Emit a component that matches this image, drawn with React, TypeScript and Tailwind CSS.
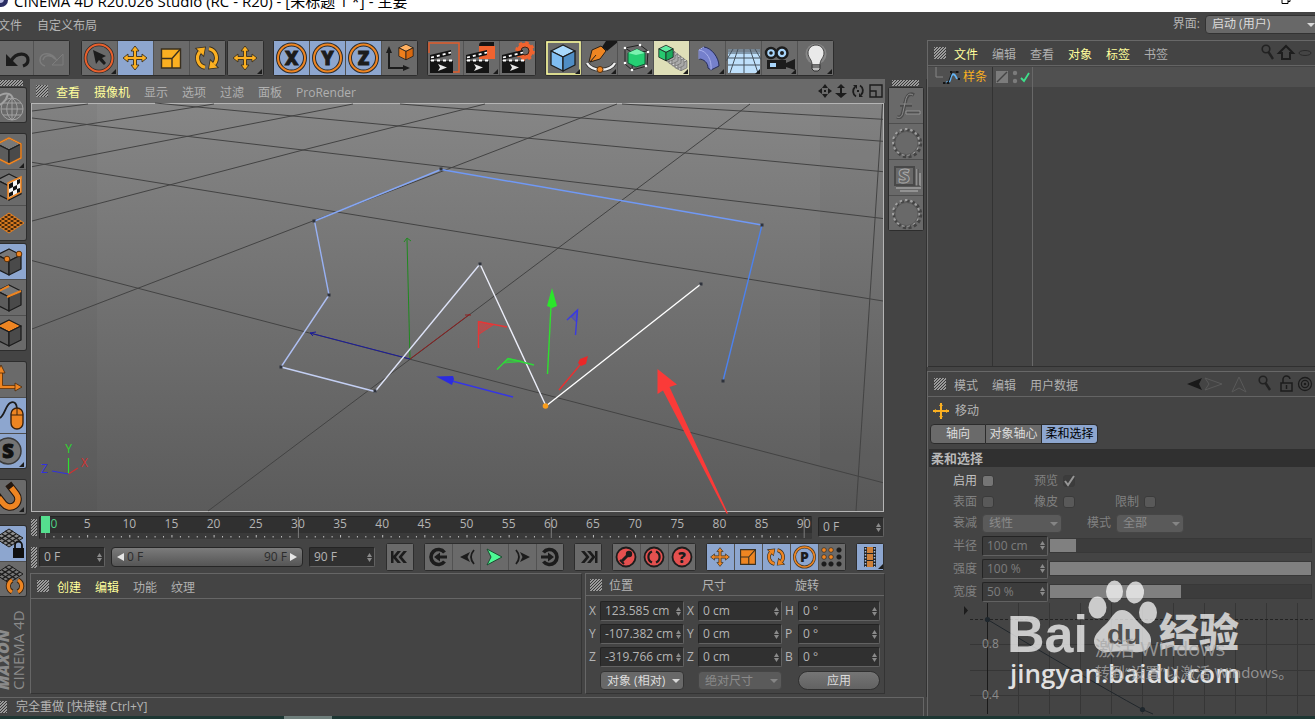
import { useState } from 'react';
import type { ReactNode } from 'react';
import clsx from 'clsx';

const DARK = '#1c1c1c';
const ORANGE = '#ee8522';
const YELLOW = '#fbb021';

const MOVE_PATH =
  'M0-12 4-7H1.5V-1.5H7V-4L12 0 7 4V1.5H1.5V7H4L0 12-4 7H-1.5V1.5H-7V4L-12 0-7-4V-1.5H-1.5V-7H-4Z';

/* ---------- icons ---------- */

function Icon({ w = 36, h = 34, children }: { w?: number; h?: number; children: ReactNode }) {
  return (
    <svg width={w} height={h} viewBox={`0 0 ${w} ${h}`} className="shrink-0" aria-hidden="true">
      {children}
    </svg>
  );
}

const corner = <path d="M34 28v5h-5z" fill={DARK} />;

function Cube({ x, y, s = 1, top = '#787878', left = '#5c5c5c', right = '#4a4a4a', stroke = DARK }: {
  x: number; y: number; s?: number; top?: string; left?: string; right?: string; stroke?: string;
}) {
  return (
    <g transform={`translate(${x} ${y}) scale(${s})`} stroke={stroke} strokeWidth={1.3} strokeLinejoin="round">
      <path d="M0-13 12-7 0-1-12-7Z" fill={top} />
      <path d="M-12-7 0-1V13L-12 7Z" fill={left} />
      <path d="M12-7 0-1V13L12 7Z" fill={right} />
    </g>
  );
}

function Rotate({ x, y, s = 1, color = YELLOW }: { x: number; y: number; s?: number; color?: string }) {
  const arcs = 'M-2 9.200A9.400 9.400 0 0 1-7-6.300M2-9.200A9.400 9.400 0 0 1 7 6.300';
  const heads = 'M-10.500-9.500-2-10.500-3.500-2.500ZM10.500 9.500 2 10.500 3.500 2.500Z';
  return (
    <g transform={`translate(${x} ${y}) scale(${s})`}>
      <path d={arcs} fill="none" stroke="#3a3020" strokeWidth={5} />
      <path d={heads} fill="#3a3020" stroke="#3a3020" strokeWidth={1.600} />
      <path d={arcs} fill="none" stroke={color} strokeWidth={3.200} />
      <path d={heads} fill={color} />
    </g>
  );
}

function Scale({ x, y, s = 1, color = YELLOW }: { x: number; y: number; s?: number; color?: string }) {
  return (
    <g transform={`translate(${x} ${y}) scale(${s})`} stroke="#3a3020" strokeWidth={1.4}>
      <path d="M-9.500-9.500h19v19h-19z" fill={color} />
      <path d="M-9.500 0H1V9.500M1 0 9.500-9.500" fill="none" />
    </g>
  );
}

function Move({ x, y, s = 1, color = YELLOW }: { x: number; y: number; s?: number; color?: string }) {
  return <path transform={`translate(${x} ${y}) scale(${s})`} d={MOVE_PATH} fill={color} stroke="#3a3020" strokeWidth={0.9} />;
}

function AxisLetter({ letter }: { letter: string }) {
  return (
    <Icon>
      <circle cx={17.500} cy={17} r={13.500} fill="none" stroke="#2b2b2b" strokeWidth={4} />
      <circle cx={17.500} cy={17} r={13.500} fill="none" stroke={ORANGE} strokeWidth={2} />
      <text x={17.500} y={24} textAnchor="middle" fontSize={19} fontWeight={800} fontFamily="Open Sans, sans-serif" fill={DARK} stroke={DARK} strokeWidth={0.8}>
        {letter}
      </text>
    </Icon>
  );
}

function Clapper({ extra, tri }: { extra: ReactNode; tri?: boolean }) {
  return (
    <Icon>
      {extra}
      <path d="M2 20h23v12H2z" fill="#141414" />
      <path d="M2 14 23 9v5L2 19z" fill="#141414" />
      <path d="M3 16.500 23 11.500M3 19.500h22" stroke="#fff" strokeWidth={1.800} strokeDasharray="3 3" />
      <path d="m10 23 9 3.500-9 3.500 2-3.500z" fill="#e8e8e8" />
      {tri && corner}
    </Icon>
  );
}

const undoIcon = (
  <Icon>
    <path d="M8 13v12h12z" fill={DARK} />
    <path d="M13 20c5-9 17-9 17-1 0 3-2 5-5 6" fill="none" stroke={DARK} strokeWidth={3.200} />
  </Icon>
);
const redoIcon = (
  <Icon>
    <path d="M29 13v11H18z" fill="none" stroke="#7d7d7d" />
    <path d="M23 20c-5-10-17-9-17-1 0 3 2 5 5 6M21 18c-4-5-11-4-12 1" fill="none" stroke="#7d7d7d" strokeWidth={1.500} />
  </Icon>
);
const pickIcon = (
  <Icon>
    <circle cx={17} cy={17} r={13.500} fill="none" stroke="#2b2b2b" strokeWidth={3.500} />
    <circle cx={17} cy={17} r={13.500} fill="none" stroke="#e9602d" strokeWidth={2} />
    <path d="m11 9 13 6-4 2 4 5-2 2-5-5-3 4z" fill={DARK} />
    {corner}
  </Icon>
);
const coordIcon = (
  <Icon>
    <path d="M7 12v15h16" fill="none" stroke={DARK} strokeWidth={2} />
    <path d="M7 5l3 7H4zM28 27l-7-3v6z" fill={DARK} />
    <Cube x={24} y={11} s={0.6} top="#ffb060" left="#ee7f1d" right="#d9690f" />
  </Icon>
);
const gear = (
  <g>
    <circle cx={25} cy={10} r={6} fill="none" stroke="#f0632f" strokeWidth={4.500} />
    <circle cx={25} cy={10} r={8.500} fill="none" stroke="#f0632f" strokeWidth={2.500} strokeDasharray="3.340 3.340" />
    <circle cx={25} cy={10} r={4} fill="none" stroke="#3a2418" />
  </g>
);
const penIcon = (
  <Icon>
    <path d="M24 0h12v1l-11 9-5-4z" fill="#191919" />
    <path d="M7 21 10 9l9-4 5 5-6 8-10 3 6-7" fill={ORANGE} stroke="#2b2016" />
    <path d="M5 22c5 9 23 9 28 0" fill="none" stroke="#333" strokeWidth={4} />
    <path d="M5 22c5 9 23 9 28 0" fill="none" stroke="#f0f0f0" strokeWidth={2.400} />
    <circle cx={18} cy={28.500} r={3} fill={ORANGE} stroke="#55300f" />
    {corner}
  </Icon>
);
const subdivIcon = (
  <Icon>
    <path d="M7 7 22 4 30 10 29 25 14 29 7 23ZM7 7l8 5 15-2M15 12l-1 17" fill="none" stroke="#222" />
    <path d="M10 12 19 8l8 4v11l-9 3-8-4z" fill="#25cf73" stroke="#0c5f35" />
    <path d="M10 12 19 8l8 4-9 2z" fill="#7af2b0" />
    {[[7, 7], [22, 4], [30, 11], [28, 25], [14, 29], [7, 22]].map(([x, y]) => (
      <circle key={`${x}-${y}`} cx={x} cy={y} r={1.300} fill="#fff" />
    ))}
    {corner}
  </Icon>
);
const clonerIcon = (
  <Icon>
    {[27, 24, 21, 18, 15].map((x) => (
      <Cube key={x} x={x} y={x * 0.75 + 3} s={0.5} top="#f6f6f6" left="#d5d5d5" right="#a9a9a9" stroke="#6b6b6b" />
    ))}
    <Cube x={12} y={12} s={0.6} top="#5fe9a0" left="#27c86f" right="#1ba95b" />
    {corner}
  </Icon>
);
const bendIcon = (
  <Icon>
    <path d="M9 9 14 6c8 1 15 11 15 19l-8 4-3-2c0-5-4-9-9-9z" fill="#7580cc" stroke="#252b57" />
    <path d="M9 9c8 1 13 10 12 20M14 6 9 9l0 9" fill="none" stroke="#a9b1ec" />
    {corner}
  </Icon>
);
const floorIcon = (
  <Icon>
    <path d="M2 8h32v24H2z" fill="#bfe0fb" />
    <path d="M2 8h32v3H2z" fill="#788693" />
    <path d="M2 12h32M2 17h32M2 24h32M18 8v24M12 8 4 32M24 8l8 24M7 8 0 20M29 8l7 12" stroke="#46525e" />
    {corner}
  </Icon>
);
const cameraIcon = (
  <Icon>
    <path d="M5 19h19v9H5zM24 22l9-4v11l-9-3z" fill={DARK} />
    <circle cx={9} cy={12} r={5} fill="#a8d5fa" stroke={DARK} strokeWidth={2.500} />
    <circle cx={20} cy={12} r={5.500} fill="#a8d5fa" stroke={DARK} strokeWidth={2.500} />
    <circle cx={9} cy={12} r={1.800} fill={DARK} />
    <circle cx={20} cy={12} r={2} fill={DARK} />
    <path d="M8 22h6v4H8z" fill="#a8d5fa" />
    {corner}
  </Icon>
);
const bulbIcon = (
  <Icon>
    <circle cx={18} cy={13} r={10.500} fill="#999" opacity={0.6} />
    <path d="M18 4c-5 0-8 4-8 8 0 5 4 6 4 12h8c0-6 4-7 4-12 0-4-3-8-8-8z" fill="#e9e9e9" stroke="#444" />
    <path d="M14 24h8v4l-2 2h-4l-2-2zM14 26h8" fill="#bbb" stroke="#333" />
    {corner}
  </Icon>
);

/* ---------- toolbar building blocks ---------- */

function ToolGroup({ children, className }: { children: ReactNode; className?: string }) {
  return <div className={clsx('flex rounded-xs ring-1 ring-[#2d2d2d]', className)}>{children}</div>;
}

function Tool({ label, active, tone, children }: { label: string; active?: boolean; tone?: string; children: ReactNode }) {
  return (
    <button
      type="button"
      aria-label={label}
      className={clsx(
        'flex h-[34px] w-9 overflow-hidden border-r border-[#525252] last:w-[35px] last:border-r-0',
        tone ?? (active ? 'bg-[#8da6cf]' : 'bg-[#6a6a6a]'),
      )}
    >
      {children}
    </button>
  );
}

function SideTool({ label, active, children }: { label: string; active?: boolean; children: ReactNode }) {
  return (
    <button
      type="button"
      aria-label={label}
      className={clsx(
        'flex h-9 w-[26px] justify-end overflow-hidden border-b border-[#4e4e4e] last:h-[34px] last:border-b-0',
        active ? 'bg-[#8da6cf]' : 'bg-[#6a6a6a]',
      )}
    >
      <Icon h={36}>{children}</Icon>
    </button>
  );
}

function SideGroup({ children }: { children: ReactNode }) {
  return <div className="overflow-hidden rounded-r-xs ring-1 ring-[#2d2d2d]">{children}</div>;
}

function Grip({ className }: { className: string }) {
  return (
    <span
      className={clsx(
        'block shrink-0 bg-[repeating-linear-gradient(135deg,#9a9a9a_0px,#9a9a9a_1px,#3a3a3a_1px,#3a3a3a_2px)] bg-[length:3px_3px]',
        className,
      )}
    />
  );
}

function MenuRow({ items, hot = [] }: { items: string[]; hot?: string[] }) {
  return (
    <nav className="flex gap-[14px] pt-[3px]">
      {items.map((item) => (
        <button type="button" key={item} className={hot.includes(item) ? 'text-[#ffff9c]' : 'text-[#b0b0b0]'}>
          {item}
        </button>
      ))}
    </nav>
  );
}

function Spinner() {
  return (
    <svg width={5} height={9} viewBox="0 0 5 9" className="shrink-0" aria-hidden="true">
      <path d="M2.500 0 5 4H0zM2.500 9 5 5H0z" fill="#8a8a8a" />
    </svg>
  );
}

function Field({ id, label, value, className, dim }: { id: string; label?: string; value: string; className: string; dim?: boolean }) {
  const [text, setText] = useState(value);
  return (
    <span
      className={clsx(
        'flex h-5 items-center rounded-xs border border-t-[#242424] border-r-[#626262] border-b-[#626262] border-l-[#242424] pr-[2px] pl-1',
        dim ? 'bg-[#3c3c3c] text-[#7c7c7c]' : 'bg-[#303030] text-[#b4b4b4]',
        className,
      )}
    >
      <input
        id={id}
        aria-label={label}
        value={text}
        disabled={dim}
        onChange={(e) => setText(e.target.value)}
        className="w-0 flex-1 bg-transparent text-xs outline-none"
      />
      <Spinner />
    </span>
  );
}

function Select({ id, label, value, className, dim }: { id: string; label?: string; value: string; className: string; dim?: boolean }) {
  return (
    <span className={clsx('relative flex h-[19px]', className)}>
      <select
        id={id}
        aria-label={label}
        disabled={dim}
        className={clsx(
          'w-full appearance-none rounded-sm border pl-[6px] text-xs leading-none opacity-100 outline-none',
          dim ? 'border-[#464646] bg-[#5a5a5a] text-[#8a8a8a]' : 'border-[#333] bg-[#686868] text-[#dcdcdc]',
        )}
      >
        <option>{value}</option>
      </select>
      <svg width={8} height={4} viewBox="0 0 8 4" className="absolute top-2 right-1" aria-hidden="true">
        <path d="M0 0h8L4 4z" fill={dim ? '#858585' : '#d8d8d8'} />
      </svg>
    </span>
  );
}

/* ---------- viewport ---------- */

const GRID = [
  'M32 118 883 218.500', 'M32 162.300 883 301', 'M32 260.600 883 482.700', 'M155 103 883 171.700',
  'M400 104 883 141.300', 'M622 104 883 119.300', 'M32 111 88 104', 'M32 133.300 214 104',
  'M32 166.700 353 104', 'M32 221 303 150 485 104', 'M32 329 617 104', 'M208 511 410 359.300 750 104',
  'M882.500 104 856 511',
];
const POINTS = [
  [723, 381], [762, 225], [441, 169], [314, 221], [329, 295], [281, 367], [375, 391], [480, 264], [701, 284],
];

function Viewport() {
  return (
    <svg viewBox="32 104 851 407" className="block w-full overflow-visible" role="img" aria-label="透视视图">
      <defs>
        <linearGradient id="sky" x1="0" y1="0" x2="0" y2="1">
          <stop offset="0" stopColor="#868686" />
          <stop offset="1" stopColor="#5b5b5b" />
        </linearGradient>
      </defs>
      <path d="M32 104h851v407H32z" fill="url(#sky)" />
      <path d="M32 104h65v407H32zM820 104h63v407h-63z" fill="#000" opacity={0.03} />
      <path d={GRID.join('')} fill="none" stroke="#434343" />
      <g fill="none">
        <path d="M410 359 407 239M404 242l3-4 4 3" stroke="#1f8a1f" />
        <path d="M410 359 310 333M316 332l-6 1 3 3" stroke="#1c1c9c" />
        <path d="M410 359 470 314M465 315h6" stroke="#8f1d1d" />
      </g>
      <g fill="none" strokeWidth={1.400} strokeLinecap="round">
        <path d="M723 381 762 225" stroke="#4c82ee" />
        <path d="M762 225 441 169.500" stroke="#7099f6" />
        <path d="M441 169.500 314.500 221" stroke="#86a7f5" />
        <path d="M314.500 221 329 295" stroke="#98b1f3" />
        <path d="M329 295 281 367" stroke="#aebff2" />
        <path d="M281 367 375 391.500" stroke="#c4d0f4" />
        <path d="M375 391.500 480 264" stroke="#dde2f6" />
        <path d="M480 264 546 406" stroke="#eceef9" />
        <path d="M546 406 701 284" stroke="#fff" />
      </g>
      {POINTS.map(([x, y]) => (
        <path key={x} d={`M${x - 1.5} ${y - 1.5}h3v3h-3z`} fill="#2f333c" />
      ))}
      <circle cx={545.500} cy={406} r={2.800} fill="#f99d1c" />
      <g strokeWidth={1.400}>
        <path d="M547.500 374 551 306" stroke="#2fe02f" />
        <path d="m552 288 5 18-5 2-5-2z" fill="#2be62b" />
        <path d="M559 390 580 365" stroke="#ea3030" />
        <path d="m588 356-2 8-5 2-3-3 2-4z" fill="#ea2828" />
        <path d="M513 397 452 381" stroke="#3535e6" />
        <path d="m436 376.500 17-.5 1 3-2 6z" fill="#2b2be0" />
        <path d="M478.500 348V321.500L507 327" fill="none" stroke="#e83636" />
        <path d="M478.500 321.500 493 325 478.500 334.500z" fill="#e8363688" stroke="#e83636" strokeWidth={0.8} />
        <path d="M497 369.500 508 358.500 534 365" fill="none" stroke="#2fd93a" />
        <path d="m503 363 5-4.500 15 3z" fill="#2fd93a88" stroke="#2fd93a" strokeWidth={0.8} />
        <path d="M575.500 335 577.500 310 567 320" fill="none" stroke="#3a3ae2" />
        <path d="m577.500 310-6 7 5 5z" fill="#3a3ae255" stroke="#3a3ae2" strokeWidth={0.8} />
      </g>
      <path d="M68.500 474V458" stroke="#2fe02f" strokeWidth={1.200} />
      <path d="M68.500 474 78 468" stroke="#d23131" strokeWidth={1.200} />
      <path d="M68.500 474 52 471" stroke="#3131dd" strokeWidth={1.200} />
      <g fontSize={12} fontFamily="Open Sans, sans-serif" textAnchor="middle">
        <text x={68.500} y={453} fill="#2fd92f">Y</text>
        <text x={84.500} y={467} fill="#d23131">X</text>
        <text x={44.500} y={473} fill="#3131dd">Z</text>
      </g>
      <path d="M657.500 369 677 384.500 669.500 387 728 513.500H726.500L663 390.500 657.500 394z" fill="#fb3a38" />
    </svg>
  );
}

/* ---------- timeline ---------- */

function Ruler() {
  const frames = Array.from({ length: 91 }, (_, i) => i);
  return (
    <svg viewBox="39 517 773 23" className="min-w-0 flex-1 rounded-xs bg-[#303030]" role="img" aria-label="时间线">
      <path d="M39 534h773v6H39z" fill="#3a3a3a" />
      <path d="M39.500 540V517.500H812" fill="none" stroke="#232323" />
      <path d="M41 517h9v17h-9z" fill="#55df8f" />
      {frames.map((f) => {
        const x = 45.5 + f * 8.43;
        if (f % 30 === 0) return <path key={f} d={`M${x} ${f ? 518 : 534}V539`} stroke="#7c7c7c" />;
        return <path key={f} d={`M${x} ${f % 5 ? 537 : 536}V538.500`} stroke="#c0c0c0" />;
      })}
      <g fontSize={12} fontFamily="Open Sans, sans-serif" textAnchor="middle" fill="#b4b4b4">
        <text x={54} y={529} fill="#4fd287">0</text>
        {frames.filter((f) => f && f % 5 === 0).map((f) => (
          <text key={f} x={45 + f * 8.43} y={529}>{f}</text>
        ))}
      </g>
    </svg>
  );
}

function PlayGroup({ children, className }: { children: ReactNode; className?: string }) {
  return <div className={clsx('flex shrink-0 rounded-xs ring-1 ring-[#2d2d2d]', className)}>{children}</div>;
}

function Play({ label, active, children }: { label: string; active?: boolean; children: ReactNode }) {
  return (
    <button
      type="button"
      aria-label={label}
      className={clsx(
        'flex h-[26px] w-7 overflow-hidden border-r border-[#525252] last:w-[26px] last:border-r-0',
        active ? 'bg-[#8da6cf]' : 'bg-[#6a6a6a]',
      )}
    >
      <Icon w={26} h={26}>{children}</Icon>
    </button>
  );
}

function RedDot({ children }: { children: ReactNode }) {
  return (
    <>
      <circle cx={13} cy={13} r={9.500} fill="#e4504f" stroke={DARK} strokeWidth={1.800} />
      {children}
    </>
  );
}

function Playback() {
  return (
    <div className="flex h-[30px] items-center pl-px">
      <Grip className="h-[21px] w-[6px]" />
      <Field id="start" label="起始帧" value="0 F" className="ml-[2px] w-[66px]" />
      <div className="ml-[6px] flex h-5 min-w-0 flex-1 items-center justify-between rounded-sm border border-[#262626] bg-linear-to-b from-[#7b7b7b] to-[#555] px-1 text-[#2c2c2c]">
        <button type="button" className="flex items-center gap-[3px]">
          <svg width={8} height={8} viewBox="0 0 8 8"><path d="M8 0v8L1 4z" fill="#e6e6e6" /></svg>
          0 F
        </button>
        <button type="button" className="flex items-center gap-[3px]">
          90 F
          <svg width={8} height={8} viewBox="0 0 8 8"><path d="M0 0v8l7-4z" fill="#e6e6e6" /></svg>
        </button>
      </div>
      <Field id="end" label="结束帧" value="90 F" className="ml-[6px] w-[66px]" />
      <PlayGroup className="ml-3">
        <Play label="转到开始">
          <path d="M4 7h2.500v12H4zM14 7l-5 6 5 6h-3.500l-5-6 5-6zM20 7l-5 6 5 6h-3.500l-5-6 5-6z" fill={DARK} />
        </Play>
      </PlayGroup>
      <PlayGroup className="ml-3">
        <Play label="上一关键帧">
          <path d="M19.500 8.500a7.500 7.500 0 1 0 0 9" fill="none" stroke={DARK} strokeWidth={3.600} />
          <path d="m9 13 6-4.500v3h7v3h-7v3z" fill={DARK} />
        </Play>
        <Play label="上一帧">
          <path d="m7 13 10-5-2.500 5 2.500 5z" fill={DARK} />
          <path d="M21 6q-6 7 0 14" fill="none" stroke={DARK} strokeWidth={1.800} />
        </Play>
        <Play label="播放"><path d="m6 5 15 8-15 8 4-8z" fill="#4dfa94" stroke="#1c4a30" /></Play>
        <Play label="下一帧">
          <path d="m21 13-10-5 2.500 5-2.500 5z" fill={DARK} />
          <path d="M7 6q6 7 0 14" fill="none" stroke={DARK} strokeWidth={1.800} />
        </Play>
        <Play label="下一关键帧">
          <path d="M6.500 8.500a7.500 7.500 0 1 1 0 9" fill="none" stroke={DARK} strokeWidth={3.600} />
          <path d="m17 13-6-4.500v3H4v3h7v3z" fill={DARK} />
        </Play>
      </PlayGroup>
      <PlayGroup className="ml-3">
        <Play label="转到结束">
          <path d="M20 7h2.500v12H20zM12 7l5 6-5 6h3.500l5-6-5-6zM6 7l5 6-5 6h3.500l5-6-5-6z" fill={DARK} />
        </Play>
      </PlayGroup>
      <PlayGroup className="ml-3">
        <Play label="记录关键帧">
          <RedDot><path d="m9 17 7-7" stroke={DARK} strokeWidth={3} /><circle cx={16} cy={10} r={3.200} fill={DARK} /><path d="m7 16 4 4" stroke={DARK} strokeWidth={2} /></RedDot>
        </Play>
        <Play label="自动关键帧">
          <RedDot><path d="M11 7.500a6 6 0 0 0 0 11M15 7.500a6 6 0 0 1 0 11" fill="none" stroke={DARK} strokeWidth={2.200} /></RedDot>
        </Play>
        <Play label="帮助">
          <RedDot>
            <text x={13} y={18.500} textAnchor="middle" fontSize={15} fontWeight={800} fontFamily="Open Sans, sans-serif" fill={DARK}>?</text>
          </RedDot>
        </Play>
      </PlayGroup>
      <PlayGroup className="ml-3">
        <Play label="位置" active><Move x={13} y={13} s={0.78} color={ORANGE} /></Play>
        <Play label="缩放" active><Scale x={13} y={13} s={0.78} color={ORANGE} /></Play>
        <Play label="旋转" active><Rotate x={13} y={13} s={0.75} color={ORANGE} /></Play>
        <Play label="参数" active>
          <circle cx={13.500} cy={13} r={10} fill="none" stroke="#4a3c28" strokeWidth={3} />
          <circle cx={13.500} cy={13} r={10} fill="none" stroke={ORANGE} strokeWidth={1.500} />
          <text x={13.500} y={18} textAnchor="middle" fontSize={14} fontWeight={800} fontFamily="Open Sans, sans-serif" fill={DARK}>P</text>
        </Play>
        <Play label="点级别">
          {[6, 13, 20].map((y) =>
            [5, 12, 20].map((x) => (
              <circle key={`${x}-${y}`} cx={x} cy={y} r={2.300} fill={x < 20 && y < 20 ? ORANGE : DARK} stroke={DARK} strokeWidth={0.6} />
            )),
          )}
        </Play>
      </PlayGroup>
      <PlayGroup className="mr-[2px] ml-3">
        <Play label="动画布局" active>
          <path d="M7 3h12v20H7z" fill="#222" />
          <path d="M10 3h6v6h-6zM10 10h6v6h-6zM10 17h6v6h-6z" fill="#cf8038" />
          <path d="M8.500 4v19M17.500 4v19" stroke="#a9bbda" strokeWidth={1.500} strokeDasharray="1.500 1.500" />
          <path d="M26 20v5h-5z" fill={DARK} />
        </Play>
      </PlayGroup>
    </div>
  );
}

/* ---------- coordinates ---------- */

const COORDS = [
  ['X', '123.585 cm', 'X', '0 cm', 'H', '0 °'],
  ['Y', '-107.382 cm', 'Y', '0 cm', 'P', '0 °'],
  ['Z', '-319.766 cm', 'Z', '0 cm', 'B', '0 °'],
];

function Coordinates() {
  return (
    <section className="flex w-[300px] shrink-0 flex-col border border-t-[#666] border-r-[#343434] border-b-[#343434] border-l-[#666]">
      <header className="flex h-[22px] items-center border-b border-[#666] pt-[3px] pl-1 text-[#b4b4b4]">
        <Grip className="mb-[3px] h-3 w-3" />
        <span className="ml-[7px] w-[93px]">位置</span>
        <span className="w-[93px]">尺寸</span>
        <span>旋转</span>
      </header>
      <div className="grid grid-cols-[11px_84px_14px_84px_16px_82px] gap-y-[3px] pt-[5px] pl-[3px] text-[#b4b4b4]">
        {COORDS.map((row) =>
          [0, 2, 4].map((c) => (
            <div key={`${row[0]}${c}`} className="contents">
              <label htmlFor={`c-${row[0]}-${c}`} className={clsx('self-center', c > 0 && 'pl-[3px]')}>{row[c]}</label>
              <Field id={`c-${row[0]}-${c}`} value={row[c + 1]} className="" />
            </div>
          )),
        )}
      </div>
      <div className="mt-1 flex pl-[14px]">
        <Select id="space" label="坐标空间" value="对象 (相对)" className="w-[84px]" />
        <Select id="size" label="尺寸模式" value="绝对尺寸" dim className="ml-[14px] w-[84px]" />
        <button type="button" className="ml-4 h-[19px] w-[82px] rounded-full border border-[#303030] bg-linear-to-b from-[#757575] to-[#626262] leading-none text-[#dcdcdc]">
          应用
        </button>
      </div>
    </section>
  );
}

/* ---------- side bars ---------- */

function LeftBar() {
  return (
    <aside className="w-[30px] shrink-0 overflow-hidden">
      <div className="flex w-[26px] flex-col gap-3">
        <div className="flex flex-col gap-[2px] pt-px">
          <Grip className="h-[6px] w-[23px]" />
          <SideGroup>
            <SideTool label="转为可编辑">
              <g fill="none" stroke="#a2a2a2">
                <path d="M2 19C4 7 20 0 23 11M4 18c6 0 12-4 14-12" strokeWidth={2} />
                <circle cx={22} cy={21} r={11} />
                <path d="M11 21h22M13 15h18M13 27h18M22 10v22M22 10c-7 5-7 17 0 22M22 10c7 5 7 17 0 22" />
              </g>
            </SideTool>
          </SideGroup>
        </div>
        <div className="flex flex-col gap-1">
          <SideGroup>
            <SideTool label="模型">
              <Cube x={19} y={17} stroke="#202020" />
              <path d="M19 4 31 10V24L19 30 7 24V10Z" fill="none" stroke={ORANGE} strokeWidth={1.600} />
              <path d="M34 29v5h-5z" fill={DARK} />
            </SideTool>
            <SideTool label="纹理">
              <Cube x={19} y={17} />
              <path d="M18 13 31 7v15l-13 7z" fill="#f5f5f5" stroke={ORANGE} strokeWidth={1.600} />
              <path d="m19 14 4-2v5l-4 2zM27 10l3-1v4l-3 2zM23 17l4-2v4l-4 2zM19 23l4-2v4l-4 2zM27 19l3-1v4l-3 1z" fill="#111" />
            </SideTool>
            <SideTool label="工作平面">
              <path d="M19 7 34 17 19 27 4 17Z" fill="#4a2a0c" stroke={ORANGE} />
              <path d="m7 15 15 10M10 13l15 10M13 11l15 10M16 9l15 10M31 15 16 25M28 13 13 23M25 11 10 21M22 9 7 19" stroke={ORANGE} />
            </SideTool>
          </SideGroup>
          <SideGroup>
            <SideTool label="点" active>
              <Cube x={19} y={18} />
              <circle cx={17} cy={15} r={2.800} fill={ORANGE} stroke="#5a300a" />
              <circle cx={29} cy={10} r={2.800} fill={ORANGE} stroke="#5a300a" />
            </SideTool>
            <SideTool label="边">
              <Cube x={19} y={18} />
              <path d="M7 12 19 6M17 17 31 11" stroke={ORANGE} strokeWidth={2} />
            </SideTool>
            <SideTool label="多边形"><Cube x={19} y={17} top={ORANGE} /></SideTool>
          </SideGroup>
        </div>
        <SideGroup>
          <SideTool label="轴心">
            <path d="M11 8v17h15" fill="none" stroke="#4a2a0c" strokeWidth={4} />
            <path d="M11 8v17h15" fill="none" stroke={ORANGE} strokeWidth={2.400} />
            <path d="m11 3 4 8H7zM32 25l-7-4v8z" fill={ORANGE} stroke="#4a2a0c" strokeWidth={0.8} />
          </SideTool>
          <SideTool label="微调" active>
            <path d="M9 20c5 0 6-12 11-15s7 2 7 6" fill="none" stroke={DARK} strokeWidth={1.800} />
            <rect x={21} y={10} width={12} height={21} rx={6} fill={ORANGE} stroke="#3c220c" strokeWidth={1.400} />
            <path d="M21 17h12M27 10v7" stroke="#3c220c" />
          </SideTool>
          <SideTool label="独显" active>
            <circle cx={18} cy={17} r={13} fill="#747474" stroke="#3b3b3b" strokeWidth={1.500} />
            <text x={18} y={24} textAnchor="middle" fontSize={20} fontWeight={800} fontFamily="Open Sans, sans-serif" fill="#111" stroke="#111">S</text>
            <path d="M34 28v5h-5z" fill={DARK} />
          </SideTool>
        </SideGroup>
        <SideGroup>
          <SideTool label="捕捉">
            <g transform="translate(20 19) rotate(-38)" fill="none">
              <path d="M-8-13V0A8 8 0 0 0 8 0V-13" stroke="#241810" strokeWidth={7.500} />
              <path d="M-8-8V0A8 8 0 0 0 8 0V-8" stroke={ORANGE} strokeWidth={5.500} />
            </g>
            <path d="M34 27v5h-5z" fill={DARK} />
          </SideTool>
        </SideGroup>
        <SideGroup>
          <SideTool label="锁定工作平面" active>
            <path d="M19 3 33 12 19 21 5 12Z" fill="#8b8b8b" stroke="#1c1c1c" />
            <path d="m8 10 14 9M12 8l14 9M15 5l14 9M30 10 16 19M26 8 12 17M23 5 9 14" stroke="#1c1c1c" strokeWidth={1.400} />
            <path d="M23 22h11v10H23z" fill="#111" />
            <path d="M25 22v-3a3.500 3.500 0 0 1 7 0v3" fill="none" stroke="#111" strokeWidth={1.800} />
          </SideTool>
          <SideTool label="工作平面模式">
            <path d="M19 3 33 12 19 21 5 12Z" fill="#777" stroke="#1c1c1c" />
            <path d="m8 10 14 9M12 8l14 9M15 5l14 9M30 10 16 19M26 8 12 17M23 5 9 14" stroke="#1c1c1c" strokeWidth={1.400} />
            <path d="M22 18c-5 3-5 9 0 12M28 18c5 3 5 9 0 12" fill="none" stroke="#3a2410" strokeWidth={5} />
            <path d="M22 18c-5 3-5 9 0 12M28 18c5 3 5 9 0 12" fill="none" stroke={ORANGE} strokeWidth={3.200} />
          </SideTool>
        </SideGroup>
        <svg viewBox="0 0 26 86" width={26} height={86} role="img" aria-label="MAXON CINEMA 4D">
          <g transform="rotate(-90)" fontFamily="Open Sans, sans-serif" fill="#8a8a8a">
            <text x={-82} y={9} fontSize={16} fontWeight={800} fontStyle="italic">MAXON</text>
            <text x={-82} y={24} fontSize={15}>CINEMA 4D</text>
          </g>
        </svg>
      </div>
    </aside>
  );
}

function EmbossRing() {
  return (
    <>
      <circle cx={18.500} cy={18.500} r={13} fill="none" stroke="#434343" strokeWidth={3.500} strokeDasharray="3 2.440" />
      <circle cx={17} cy={17} r={13} fill="none" stroke="#a0a0a0" strokeWidth={2} strokeDasharray="2.500 2.940" />
      <circle cx={17.500} cy={18} r={11.500} fill="#696969" stroke="#565656" strokeWidth={0.8} />
    </>
  );
}

function RightBar() {
  const items: [string, ReactNode][] = [
    ['函数', (
      <>
        <path d="M25 6c-5-3-8 2-9 8l-2 9c-1 5-3 6-6 5M11 16h12" fill="none" stroke="#4b4b4b" strokeWidth={3.500} />
        <path d="M24 6c-5-3-7 2-8 8l-2 9c-1 5-3 6-6 5M11 15h12" fill="none" stroke="#8d8d8d" />
        <path d="M17 22h14v3H17z" fill="#505050" stroke="#a0a0a0" strokeWidth={0.8} />
      </>
    )],
    ['环一', <EmbossRing key="a" />],
    ['脚本', (
      <>
        <path d="M6 6h19v18H6z" fill="none" stroke="#484848" strokeWidth={2} />
        <text x={15} y={22} textAnchor="middle" fontSize={20} fontWeight={800} fontFamily="Open Sans, sans-serif" fill="#666" stroke="#a8a8a8">S</text>
        <path d="M28 8v17M31 12v13M7 27h25M11 30h18" stroke="#a0a0a0" strokeWidth={1.400} />
        <path d="M29 8v17M7 25h24" stroke="#484848" />
      </>
    )],
    ['环二', <EmbossRing key="b" />],
  ];
  return (
    <aside className="flex w-[42px] shrink-0 flex-col items-center border-r border-[#333] pt-px">
      <Grip className="h-[6px] w-[27px]" />
      <div className="mt-[2px] rounded-xs ring-1 ring-[#2d2d2d]">
        {items.map(([label, art]) => (
          <button key={label} type="button" aria-label={label} className="block h-9 w-[34px] overflow-hidden border-b border-[#4e4e4e] bg-[#696969] last:h-[34px] last:border-b-0">
            <Icon w={34} h={34}>{art}</Icon>
          </button>
        ))}
      </div>
    </aside>
  );
}

/* ---------- right panels ---------- */

function Objects() {
  return (
    <section className="flex flex-col border-t border-l border-[#686868]">
      <header className="flex h-[25px] items-center border-b border-[#646464] pl-[6px]">
        <Grip className="mr-2 h-3 w-3" />
        <MenuRow items={['文件', '编辑', '查看', '对象', '标签', '书签']} hot={['文件', '对象', '标签']} />
        <svg width={54} height={18} viewBox="0 0 54 18" className="ml-auto" aria-hidden="true">
          <circle cx={5} cy={5} r={3.800} fill="none" stroke="#222" strokeWidth={1.600} />
          <path d="m7.500 8 4.500 7" stroke="#222" strokeWidth={2.400} />
          <path d="M25 2 18 9h3v6h8V9h3z" fill="none" stroke="#1d1d1d" strokeWidth={2} />
          <ellipse cx={44} cy={9} rx={6} ry={2.500} fill="none" stroke="#2a2a2a" />
        </svg>
      </header>
      <div className="flex h-[300px] pt-px">
        <div className="w-[65px] border-r border-[#333]">
          <div className="flex h-5 items-center bg-[#505050] pl-[6px] text-[#fbb021]">
            <svg width={27} height={20} viewBox="0 0 27 20" aria-hidden="true">
              <path d="M2 0v10h7" fill="none" stroke="#858585" />
              <path d="M12 15c4 2 4-2 5-5s3-5 6 2" fill="none" stroke="#64b5f5" strokeWidth={1.800} />
              <path d="M10 16h6M16 5h9M14 16l4-11" stroke="#151515" />
              <path d="M9 15h2v2H9zM13 15h2v2h-2zM16 4h2v2h-2zM22 4h2v2h-2zM24 11h2v2h-2z" fill="#151515" />
            </svg>
            <span className="ml-[2px]">样条</span>
          </div>
        </div>
        <div className="w-10 border-r border-[#686868]">
          <div className="flex h-5 items-center bg-[#505050] pl-[3px]">
            <svg width={35} height={20} viewBox="0 0 35 20" aria-hidden="true">
              <path d="M0 4h12v12H0z" fill="#7c7c7c" />
              <path d="M1 15 11 5" stroke="#444" strokeWidth={1.500} />
              <circle cx={19} cy={6} r={2.200} fill="#7c7c7c" />
              <circle cx={19} cy={14} r={2.200} fill="#7c7c7c" />
              <path d="m25 11 3 3 5-8" fill="none" stroke="#3ee08b" strokeWidth={1.800} />
            </svg>
          </div>
        </div>
        <div className="flex-1"><div className="h-5 bg-[#505050]" /></div>
      </div>
      <div className="border-b border-[#303030]" />
    </section>
  );
}

function Check({ id, label, checked, dim }: { id: string; label: string; checked?: boolean; dim?: boolean }) {
  return (
    <span className={clsx('flex items-center gap-[5px]', dim ? 'text-[#808080]' : 'text-[#c0c0c0]')}>
      <label htmlFor={id}>{label}</label>
      <span className="relative flex">
        <input
          id={id}
          type="checkbox"
          disabled={dim}
          defaultChecked={checked}
          className={clsx(
            'size-3 appearance-none rounded-[3px] border border-[#3b3b3b]',
            checked ? 'bg-[#3c3c3c]' : dim ? 'bg-[#595959]' : 'bg-[#757575]',
          )}
        />
        {checked && (
          <svg width={12} height={12} viewBox="0 0 12 12" className="pointer-events-none absolute inset-0" aria-hidden="true">
            <path d="m2 6 3 4 6-9" fill="none" stroke="#969696" strokeWidth={2} />
          </svg>
        )}
      </span>
    </span>
  );
}

function SliderRow({ id, label, value, fill }: { id: string; label: string; value: string; fill: number }) {
  return (
    <div className="flex h-[23px] items-center pl-[25px] text-[#808080]">
      <label htmlFor={id} className="w-[29px]">{label}</label>
      <Field id={id} value={value} dim className="w-[66px]" />
      <input
        type="range"
        aria-label={label}
        min={0}
        max={100}
        defaultValue={fill}
        disabled
        className="mr-[3px] ml-px h-[15px] min-w-0 flex-1 appearance-none border border-[#383838] [&::-webkit-slider-thumb]:opacity-0"
        style={{ background: `linear-gradient(to right, #808080 ${fill}%, #3c3c3c ${fill}%)` }}
      />
    </div>
  );
}

function Falloff() {
  const cols = [1018, 1049, 1080, 1111, 1142, 1173, 1204, 1235, 1266, 1297];
  return (
    <svg viewBox="928 603 387 111" className="block w-full overflow-visible" role="img" aria-label="衰减曲线">
      <path d="m964 606 4 4.500-4 4.500z" fill="#1c1c1c" />
      <path d={cols.map((x) => `M${x + 0.5} 603v111`).join('') + 'M970 644.500h345M970 670.500h345M970 695.500h345'} stroke="#363636" fill="none" />
      <path d="M987.500 603v111" stroke="#1a1a1a" />
      <path d="M970 619.500h345" stroke="#222" strokeDasharray="3 2" />
      <path d="M987.500 619.500Q1080 675 1142.500 709.500L1153 714" fill="none" stroke="#20262b" />
      <circle cx={987.500} cy={619.500} r={2.600} fill="#1f272d" />
      <circle cx={1142.500} cy={709.500} r={2.600} fill="#1f272d" />
      <g fontSize={12} fontFamily="Open Sans, sans-serif" fill="#8c8c8c">
        <text x={982} y={648}>0.8</text>
        <text x={982} y={699}>0.4</text>
      </g>
      <g fontFamily="Open Sans, Noto Sans CJK SC, sans-serif" fill="#fff" fillOpacity={0.72}>
        <text x={1007} y={652} fontSize={52} fontWeight={700} fontFamily="Liberation Sans, sans-serif">Bai</text>
        <text x={1159} y={647} fontSize={40} fontWeight={900} fontFamily="Noto Sans CJK SC, sans-serif">经验</text>
        <ellipse cx={1097.500} cy={607.500} rx={9} ry={11} />
        <ellipse cx={1114.500} cy={591.500} rx={8.500} ry={11} />
        <ellipse cx={1135} cy={592.500} rx={9} ry={11} transform="rotate(8 1135 592.500)" />
        <ellipse cx={1148} cy={612.500} rx={9} ry={11} />
        <path d="M1122 610c8 0 11 7 17 13 7 7 13 11 12 19-1 9-10 11-17 10-8-1-16-1-24 0-8 1-16-3-16-11 0-7 7-12 13-18 6-7 8-13 15-13z" />
        <text x={1107} y={644} fontSize={28} fontWeight={700} fill="#484848" fillOpacity={0.95} fontFamily="Liberation Sans, sans-serif">du</text>
        <text x={1010} y={683} fontSize={26} fontWeight={600} fillOpacity={0.85}>jingyan.baidu.com</text>
      </g>
      <g fontFamily="Open Sans, Noto Sans CJK SC, sans-serif" fill="#a9a9a9" fillOpacity={0.8}>
        <text x={1095} y={656} fontSize={20}>激活 Windows</text>
        <text x={1095} y={678} fontSize={15}>转到“设置”以激活 Windows。</text>
      </g>
    </svg>
  );
}

function Attributes() {
  const [tab, setTab] = useState('柔和选择');
  return (
    <section className="mt-1 flex flex-1 flex-col border-t border-l border-[#686868]">
      <header className="flex h-[25px] items-center border-b border-[#646464] pl-[6px] text-[#b4b4b4]">
        <Grip className="mr-2 h-3 w-3" />
        <MenuRow items={['模式', '编辑', '用户数据']} />
        <svg width={128} height={18} viewBox="0 0 128 18" className="ml-auto" aria-hidden="true">
          <path d="M0 9 15 3 12 9l3 6z" fill="#191919" />
          <path d="M18 3 35 9 18 15l4-6z" fill="none" stroke="#595959" />
          <path d="m52 2 7 15-7-4-7 4z" fill="none" stroke="#595959" />
          <circle cx={76} cy={5} r={3.800} fill="none" stroke="#222" strokeWidth={1.600} />
          <path d="m78.500 8 4.500 7" stroke="#222" strokeWidth={2.400} />
          <path d="M94 8h11v8H94zM96 8V5a3.500 3.500 0 0 1 7-1M99.500 10v4" fill="none" stroke="#1c1c1c" strokeWidth={1.500} />
          <circle cx={118} cy={9} r={6.500} fill="none" stroke="#1c1c1c" strokeWidth={1.300} />
          <circle cx={118} cy={9} r={3.600} fill="none" stroke="#1c1c1c" strokeWidth={1.300} />
          <circle cx={118} cy={9} r={1.300} fill="#1c1c1c" />
        </svg>
      </header>
      <div className="flex h-[27px] items-center gap-[6px] pl-[5px] text-[#b4b4b4]">
        <Icon w={16} h={16}><path d="M8 0v16M0 8h16" stroke={YELLOW} strokeWidth={2} /><path d="m8 0 2 3H6zM8 16l2-3H6zM0 8l3-2v4zM16 8l-3-2v4z" fill={YELLOW} /></Icon>
        移动
      </div>
      <div className="flex pl-[2px]">
        {['轴向', '对象轴心', '柔和选择'].map((name) => (
          <button
            key={name}
            type="button"
            onClick={() => setTab(name)}
            className={clsx(
              'h-5 w-14 border-y border-r border-[#2c2c2c] leading-none first:rounded-l-sm first:border-l last:rounded-r-sm',
              tab === name ? 'bg-[#8da6cf] text-black' : 'bg-[#6a6a6a] text-[#dcdcdc]',
            )}
          >
            {name}
          </button>
        ))}
      </div>
      <h2 className="mt-[5px] ml-px flex h-[18px] items-center bg-[#303030] pl-[2px] text-[13px] font-bold text-[#b8b8b8]">柔和选择</h2>
      <div className="mt-[5px] grid grid-cols-[81px_81px_81px] gap-y-[3px] pl-[25px] leading-[18px]">
        <Check id="enable" label="启用" />
        <Check id="preview" label="预览" checked dim />
        <span />
        <Check id="surface" label="表面" dim />
        <Check id="rubber" label="橡皮" dim />
        <Check id="limit" label="限制" dim />
      </div>
      <div className="mt-px flex h-[22px] items-center pl-[25px] text-[#808080]">
        <label htmlFor="falloff" className="w-[29px]">衰减</label>
        <Select id="falloff" value="线性" dim className="w-20" />
        <label htmlFor="mode" className="ml-[25px] w-[29px]">模式</label>
        <Select id="mode" value="全部" dim className="w-[68px]" />
      </div>
      <SliderRow id="radius" label="半径" value="100 cm" fill={10} />
      <SliderRow id="strength" label="强度" value="100 %" fill={100} />
      <SliderRow id="width" label="宽度" value="50 %" fill={50} />
      <Falloff />
    </section>
  );
}

/* ---------- page ---------- */

export default function App() {
  return (
    <div className="flex min-h-screen flex-col overflow-hidden bg-[#444] font-['Open_Sans','Noto_Sans_CJK_SC',sans-serif] text-xs leading-4">
      <div className="flex h-3 items-start overflow-hidden bg-white text-[15px] leading-[3px] whitespace-pre text-black">
        <svg width={14} height={12} viewBox="0 0 14 12" aria-hidden="true">
          <circle cx={1} cy={0} r={7} fill="#2b2e63" />
          <circle cx={0} cy={-1} r={4} fill="#b9bce0" />
        </svg>
        CINEMA 4D R20.026 Studio (RC - R20) - [未标题 1 *] - 主要
        <svg width={10} height={6} viewBox="0 0 10 6" className="mr-6 ml-auto" aria-hidden="true">
          <path d="M1 0v3.500h6V0M7 1.500h2V0" fill="none" stroke="#000" />
        </svg>
      </div>
      <div className="flex h-7 items-center justify-between">
        <nav className="-ml-0.5 flex gap-[15px] text-[#b4b4b4]">
          <button type="button">文件</button>
          <button type="button">自定义布局</button>
        </nav>
        <div className="-mr-1 flex items-center gap-[5px] pb-1 text-[#b4b4b4]">
          <label htmlFor="layout">界面:</label>
          <Select id="layout" value="启动 (用户)" className="w-[114px]" />
        </div>
      </div>

      <div className="flex flex-1">
        <div className="flex min-w-0 flex-1 flex-col">
          <div className="flex h-[39px] shrink-0 items-start pt-px">
            <ToolGroup className="-ml-0.5">
              <Tool label="撤销">{undoIcon}</Tool>
              <Tool label="重做">{redoIcon}</Tool>
            </ToolGroup>
            <ToolGroup className="ml-[13px]">
              <Tool label="选择">{pickIcon}</Tool>
              <Tool label="移动" active><Icon><Move x={17} y={17} /></Icon></Tool>
              <Tool label="缩放"><Icon><Scale x={17} y={17.500} /></Icon></Tool>
              <Tool label="旋转"><Icon><Rotate x={17} y={17} /></Icon></Tool>
            </ToolGroup>
            <ToolGroup className="ml-[3px]">
              <Tool label="最近工具"><Icon w={35}><Move x={17} y={17} />{corner}</Icon></Tool>
            </ToolGroup>
            <ToolGroup className="ml-[11px]">
              <Tool label="X 轴" active><AxisLetter letter="X" /></Tool>
              <Tool label="Y 轴" active><AxisLetter letter="Y" /></Tool>
              <Tool label="Z 轴" active><AxisLetter letter="Z" /></Tool>
              <Tool label="坐标系统">{coordIcon}</Tool>
            </ToolGroup>
            <ToolGroup className="ml-[11px]">
              <Tool label="渲染视图"><Clapper extra={<path d="M1 12V2h30v29h-7" fill="none" stroke="#e15c2b" strokeWidth={1.500} />} /></Tool>
              <Tool label="渲染到图片"><Clapper tri extra={<><path d="M15 5h16v13H15z" fill="#f0632f" /><path d="M15 5c0-3 1-4 3-4h12v4z" fill="#161616" /></>} /></Tool>
              <Tool label="渲染设置"><Clapper extra={gear} /></Tool>
            </ToolGroup>
            <ToolGroup className="ml-[11px]">
              <Tool label="立方体">
                <Icon>
                  <path d="M1 1h33v32H1z" fill="none" stroke="#ffff9c" strokeWidth={1.500} />
                  <Cube x={17} y={17} top="#a8d8fc" left="#7fbdf1" right="#4f8dc4" />
                  {corner}
                </Icon>
              </Tool>
              <Tool label="画笔">{penIcon}</Tool>
              <Tool label="细分曲面">{subdivIcon}</Tool>
              <Tool label="克隆" tone="bg-[#dfdfb8]">{clonerIcon}</Tool>
              <Tool label="扭曲">{bendIcon}</Tool>
              <Tool label="地面">{floorIcon}</Tool>
              <Tool label="摄像机">{cameraIcon}</Tool>
              <Tool label="灯光">{bulbIcon}</Tool>
            </ToolGroup>
          </div>

          <div className="flex flex-1">
            <LeftBar />
            <main className="flex min-w-0 flex-1 flex-col">
              <div className="flex h-6 items-center bg-[#6a6a6a] pl-[6px]">
                <Grip className="mr-2 h-3 w-3" />
                <MenuRow items={['查看', '摄像机', '显示', '选项', '过滤', '面板', 'ProRender']} hot={['查看', '摄像机']} />
                <svg width={66} height={16} viewBox="0 0 66 16" className="mr-px ml-auto" aria-hidden="true">
                  <path d="m7 1 3 4H4zM7 15l3-4H4zM0 8l4-3v6zM14 8l-4-3v6zM6 7h2v2H6z" fill={DARK} />
                  <path d="M23 1l4 4h-3v5h5l-6 5-6-5h5V5h-3z" fill={DARK} />
                  <path d="M38 13.500A6 6 0 0 1 37 4M42 2.500a6 6 0 0 1 1 9.500" fill="none" stroke={DARK} strokeWidth={1.800} />
                  <path d="M35 2h4v4zM45 14h-4v-4zM39 7h2v2h-2z" fill={DARK} />
                  <path d="M52 2h12v12H52zM52 8h6v6" fill="none" stroke={DARK} strokeWidth={1.400} />
                </svg>
              </div>
              <div className="relative mr-px ml-px border border-[#b5b5b5]">
                <Viewport />
              </div>
              <div className="flex h-[30px] items-center pr-px pl-px">
                <Grip className="h-[17px] w-[6px]" />
                <div className="ml-[2px] flex min-w-0 flex-1"><Ruler /></div>
                <Field id="current" label="当前帧" value="0 F" className="ml-[6px] w-[66px]" />
              </div>
              <Playback />
              <div className="mb-[3px] flex min-h-[121px] flex-1 gap-[3px] pt-px">
                <section className="flex-1 border border-t-[#666] border-r-[#343434] border-b-[#343434] border-l-[#666]">
                  <header className="flex h-[25px] items-center border-b border-[#666] pl-[6px]">
                    <Grip className="mr-2 h-3 w-3" />
                    <MenuRow items={['创建', '编辑', '功能', '纹理']} hot={['创建', '编辑']} />
                  </header>
                </section>
                <Coordinates />
              </div>
            </main>
            <RightBar />
          </div>

          <footer className="mr-[3px] flex h-[19px] shrink-0 items-center border-t border-r border-[#666] text-[#b4b4b4]">
            <Grip className="mr-[9px] h-3 w-[7px]" />
            完全重做 [快捷键 Ctrl+Y]
          </footer>
        </div>

        <div className="flex w-[388px] shrink-0 flex-col">
          <Objects />
          <Attributes />
        </div>
      </div>
      <div className="flex h-[3px] bg-[#1d3733]"><div className="ml-[284px] w-12 bg-[#6f7f7c]" /></div>
    </div>
  );
}
